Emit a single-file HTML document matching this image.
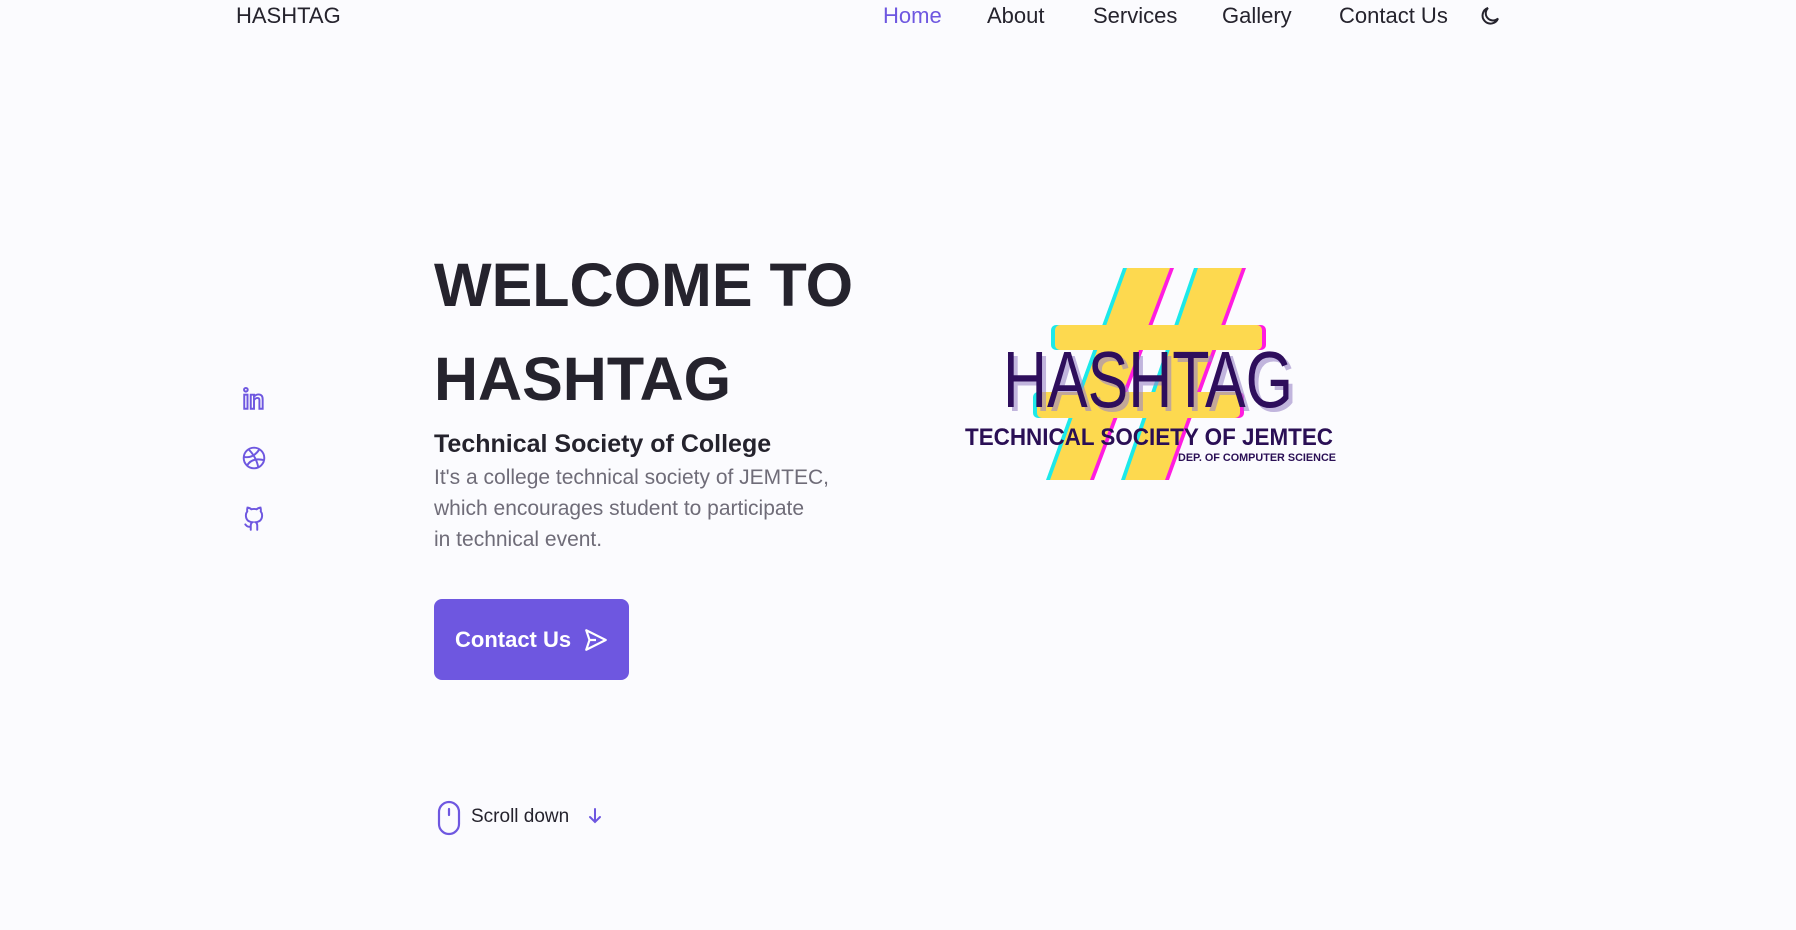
<!DOCTYPE html>
<html><head><meta charset="utf-8"><style>
*{margin:0;padding:0;box-sizing:border-box}
body{width:1796px;height:930px;background:#fbfbfe;font-family:"Liberation Sans",sans-serif;color:#25232d;position:relative;overflow:hidden}
.a{position:absolute;white-space:nowrap}
.nav{font-size:22px;top:3px}
h1{position:absolute;left:434px;top:238px;font-size:61px;line-height:94px;font-weight:700;color:#25232d}
.sub{left:434px;top:430px;font-size:25px;font-weight:700}
.p{left:434px;top:462px;font-size:21px;line-height:31px;color:#6f6c78}
.btn{left:434px;top:599px;width:195px;height:81px;background:#6e57e0;border-radius:8px;color:#fff;font-size:22px;font-weight:700;display:flex;align-items:center;padding-left:21px;gap:12px}
.ic{left:241px;width:26px;height:26px}
</style></head><body>
<div class="a nav" style="left:236px">HASHTAG</div>
<div class="a nav" style="left:883px;color:#6e57e0">Home</div>
<div class="a nav" style="left:987px">About</div>
<div class="a nav" style="left:1093px">Services</div>
<div class="a nav" style="left:1222px">Gallery</div>
<div class="a nav" style="left:1339px">Contact Us</div>
<svg class="a" style="left:1478px;top:4px" width="24" height="24" viewBox="0 0 24 24" fill="none" stroke="#25232d" stroke-width="2" stroke-linecap="round"><path d="M20 14.5A8 8 0 1 1 10 4a6.5 6.5 0 0 0 10 10.5z"/></svg>

<svg class="a ic" style="top:386px" viewBox="0 0 24 24" fill="none" stroke="#6e57e0" stroke-width="1.8"><circle cx="4.5" cy="3.5" r="1.7"/><rect x="3" y="8" width="3" height="13"/><path d="M9 21V8h3v2c1-1.5 2.5-2.2 4.2-2.2 2.6 0 3.8 1.8 3.8 4.5V21h-3v-8c0-1.3-.7-2-1.8-2S12 12 12 13.5V21z"/></svg>
<svg class="a ic" style="top:445px" viewBox="0 0 24 24" fill="none" stroke="#6e57e0" stroke-width="1.8"><circle cx="12" cy="12" r="9.5"/><path d="M7 4c5 5 8 11 9 17M3 11c5 1 10-1 14-7M5.5 19c3-5 8-7 16-5"/></svg>
<svg class="a ic" style="top:506px" viewBox="0 0 24 24" fill="none" stroke="#6e57e0" stroke-width="1.8" stroke-linecap="round"><path d="M9 22v-4c0-1.5.5-2.5 1.5-3-4-.5-6-2.5-6-6.5 0-1.5.5-2.5 1.3-3.5-.2-1-.2-2.2.2-3.5 1.5 0 2.700.8 3.5 1.5a11 11 0 0 1 5 0c.8-.7 2-1.5 3.5-1.5.4 1.3.4 2.5.2 3.5.8 1 1.3 2 1.3 3.5 0 4-2 6-6 6.5 1 .5 1.5 1.5 1.5 3v4M9 19c-3 1-4-1-5-2"/></svg>

<h1>WELCOME TO<br>HASHTAG</h1>
<div class="a sub">Technical Society of College</div>
<div class="a p">It's a college technical society of JEMTEC,<br>which encourages student to participate<br>in technical event.</div>
<div class="a btn">Contact Us <svg width="26" height="26" viewBox="0 0 24 24" fill="none" stroke="#fff" stroke-width="2" stroke-linejoin="round"><path d="M3 3l18 9-18 9 3-9z M6 12h6"/></svg></div>

<svg class="a" style="left:436px;top:800px" width="26" height="36" viewBox="0 0 26 36" fill="none" stroke="#6e57e0" stroke-width="2.2"><rect x="3" y="2" width="20" height="32" rx="10"/><path d="M13 9v6" stroke-linecap="round"/></svg>
<div class="a" style="left:471px;top:806px;font-size:19px">Scroll down</div>
<svg class="a" style="left:586px;top:806px" width="18" height="20" viewBox="0 0 18 20" fill="none" stroke="#6e57e0" stroke-width="2" stroke-linecap="round"><path d="M9 3v13M4 11l5 5 5-5"/></svg>

<svg class="a" style="left:940px;top:250px" width="420" height="240" viewBox="0 0 420 240">
<defs><g id="h"><polygon points="187,18 230,18 150,230 110,230"/><polygon points="258,18 302,18 225,230 185,230"/><rect x="115" y="75" width="207" height="25" rx="5"/><rect x="97" y="142" width="203" height="26" rx="5"/></g></defs>
<use href="#h" fill="#1de9e9" transform="translate(-4,0)"/>
<use href="#h" fill="#ff1ce0" transform="translate(4,0)"/>
<use href="#h" fill="#fdd94f"/>
<text x="67" y="161" font-family="Liberation Sans" font-size="80" fill="#9b87c8" opacity=".6" textLength="290" lengthAdjust="spacingAndGlyphs">HASHTAG</text>
<text x="63" y="157" font-family="Liberation Sans" font-size="80" fill="#2e0e5c" textLength="290" lengthAdjust="spacingAndGlyphs">HASHTAG</text>
<text x="25" y="195" font-family="Liberation Sans" font-weight="700" font-size="24" fill="#2a0f55" textLength="368" lengthAdjust="spacingAndGlyphs">TECHNICAL SOCIETY OF JEMTEC</text>
<text x="238" y="211" font-family="Liberation Sans" font-weight="700" font-size="11" fill="#2a0f55" textLength="158" lengthAdjust="spacingAndGlyphs">DEP. OF COMPUTER SCIENCE</text>
</svg>
</body></html>
